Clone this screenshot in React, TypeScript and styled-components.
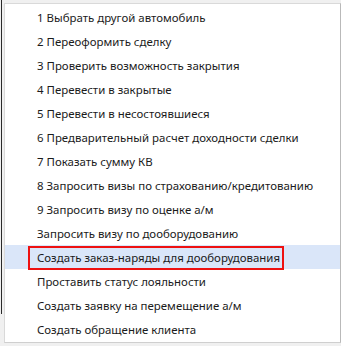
import React from "react";
import styled, { createGlobalStyle } from "styled-components";

const Global = createGlobalStyle`
  html, body { margin: 0; padding: 0; background: #f0f0f0; }
  body { width: 341px; height: 346px; overflow: hidden; }
`;

const Screen = styled.div`
  display: flex;
  align-items: flex-start;
  width: 341px;
  height: 346px;
`;

const WindowEdge = styled.div`
  width: 1px;
  height: 314px;
  margin-left: 1px;
  background: #2a2a2a;
  flex: none;
`;

const Menu = styled.ul`
  list-style: none;
  margin: 3px 0 0 2px;
  padding: 1px 0 1px 0;
  width: 337px;
  box-sizing: border-box;
  background: #ffffff;
  border: 1px solid #d9d9d9;
  border-right-color: #b9b9b9;
  border-bottom-color: #cfcfcf;
  font-family: "Noto Sans", "Open Sans", sans-serif;
  font-size: 11.45px;
  color: #1b1b1b;
`;

const Item = styled.li<{ $active?: boolean }>`
  position: relative;
  height: 24px;
  display: flex;
  align-items: center;
  padding-left: 32px;
  background: ${(p) => (p.$active ? "#dae6f9" : "transparent")};
  white-space: nowrap;
`;

const Callout = styled.span`
  position: absolute;
  left: 23px;
  top: 1px;
  width: 256px;
  height: 24px;
  box-sizing: border-box;
  border: 2px solid #ee1111;
  pointer-events: none;
`;

const items = [
  "1 Выбрать другой автомобиль",
  "2 Переоформить сделку",
  "3 Проверить возможность закрытия",
  "4 Перевести в закрытые",
  "5 Перевести в несостоявшиеся",
  "6 Предварительный расчет доходности сделки",
  "7 Показать сумму КВ",
  "8 Запросить визы по страхованию/кредитованию",
  "9 Запросить визу по оценке а/м",
  "Запросить визу по дооборудованию",
  "Создать заказ-наряды для дооборудования",
  "Проставить статус лояльности",
  "Создать заявку на перемещение а/м",
  "Создать обращение клиента",
];

export default function App() {
  return (
    <>
      <Global />
      <Screen>
        <WindowEdge />
        <Menu>
          {items.map((t, i) => (
            <Item key={t} $active={i === 10}>
              {t}
              {i === 10 && <Callout />}
            </Item>
          ))}
        </Menu>
      </Screen>
    </>
  );
}
